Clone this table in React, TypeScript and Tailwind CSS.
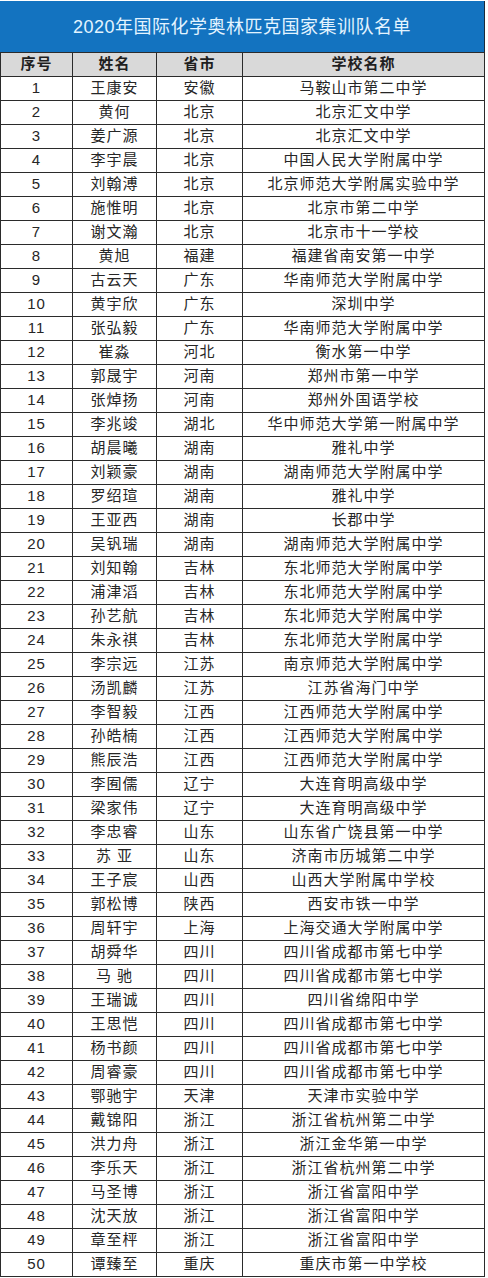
const rows: [string, string, string][] = [
  ['王康安', '安徽', '马鞍山市第二中学'],
  ['黄何', '北京', '北京汇文中学'],
  ['姜广源', '北京', '北京汇文中学'],
  ['李宇晨', '北京', '中国人民大学附属中学'],
  ['刘翰溥', '北京', '北京师范大学附属实验中学'],
  ['施惟明', '北京', '北京市第二中学'],
  ['谢文瀚', '北京', '北京市十一学校'],
  ['黄旭', '福建', '福建省南安第一中学'],
  ['古云天', '广东', '华南师范大学附属中学'],
  ['黄宇欣', '广东', '深圳中学'],
  ['张弘毅', '广东', '华南师范大学附属中学'],
  ['崔淼', '河北', '衡水第一中学'],
  ['郭晟宇', '河南', '郑州市第一中学'],
  ['张焯扬', '河南', '郑州外国语学校'],
  ['李兆竣', '湖北', '华中师范大学第一附属中学'],
  ['胡晨曦', '湖南', '雅礼中学'],
  ['刘颖豪', '湖南', '湖南师范大学附属中学'],
  ['罗绍瑄', '湖南', '雅礼中学'],
  ['王亚西', '湖南', '长郡中学'],
  ['吴钒瑞', '湖南', '湖南师范大学附属中学'],
  ['刘知翰', '吉林', '东北师范大学附属中学'],
  ['浦津滔', '吉林', '东北师范大学附属中学'],
  ['孙艺航', '吉林', '东北师范大学附属中学'],
  ['朱永祺', '吉林', '东北师范大学附属中学'],
  ['李宗远', '江苏', '南京师范大学附属中学'],
  ['汤凯麟', '江苏', '江苏省海门中学'],
  ['李智毅', '江西', '江西师范大学附属中学'],
  ['孙皓楠', '江西', '江西师范大学附属中学'],
  ['熊辰浩', '江西', '江西师范大学附属中学'],
  ['李囿儒', '辽宁', '大连育明高级中学'],
  ['梁家伟', '辽宁', '大连育明高级中学'],
  ['李忠睿', '山东', '山东省广饶县第一中学'],
  ['苏 亚', '山东', '济南市历城第二中学'],
  ['王子宸', '山西', '山西大学附属中学校'],
  ['郭松博', '陕西', '西安市铁一中学'],
  ['周轩宇', '上海', '上海交通大学附属中学'],
  ['胡舜华', '四川', '四川省成都市第七中学'],
  ['马 驰', '四川', '四川省成都市第七中学'],
  ['王瑞诚', '四川', '四川省绵阳中学'],
  ['王思恺', '四川', '四川省成都市第七中学'],
  ['杨书颜', '四川', '四川省成都市第七中学'],
  ['周睿豪', '四川', '四川省成都市第七中学'],
  ['鄂驰宇', '天津', '天津市实验中学'],
  ['戴锦阳', '浙江', '浙江省杭州第二中学'],
  ['洪力舟', '浙江', '浙江金华第一中学'],
  ['李乐天', '浙江', '浙江省杭州第二中学'],
  ['马圣博', '浙江', '浙江省富阳中学'],
  ['沈天放', '浙江', '浙江省富阳中学'],
  ['章至枰', '浙江', '浙江省富阳中学'],
  ['谭臻至', '重庆', '重庆市第一中学校'],
];

const cell = 'flex items-center justify-center border-r border-[#2b2b2b] whitespace-nowrap';

export default function App() {
  return (
    <div
      className="w-[488px] h-[1278px] bg-white pt-px text-[#262626]"
      style={{ fontFamily: '"Liberation Sans", "Noto Sans CJK SC", sans-serif' }}
    >
      <div className="w-[485px]">
        {/* 标题 */}
        <div className="h-[51px] bg-[#1373c0] border-r border-[#1b2a3a] flex items-center justify-center">
          <h1 className="text-[18px] font-normal text-[#e3f4ff] tracking-[0.5px] pt-px">
            2020年国际化学奥林匹克国家集训队名单
          </h1>
        </div>

        <div className="border-t border-l border-[#2b2b2b]">
          {/* 表头 */}
          <div className="grid grid-cols-[72px_84px_86px_242px] h-[24px] border-b border-[#2b2b2b] bg-[#d9d9d9] text-[15px] font-bold tracking-[1px] text-[#1f1f1f]">
            <div className={cell}>序号</div>
            <div className={cell}>姓名</div>
            <div className={cell}>省市</div>
            <div className={cell}>学校名称</div>
          </div>

          {rows.map(([name, prov, school], i) => (
            <div
              key={i}
              className="grid grid-cols-[72px_84px_86px_242px] h-[24px] border-b border-[#2b2b2b] text-[15px] tracking-[1px]"
            >
              <div className={cell}>{i + 1}</div>
              <div className={cell}>{name}</div>
              <div className={cell}>{prov}</div>
              <div className={cell}>{school}</div>
            </div>
          ))}
        </div>
      </div>
    </div>
  );
}
